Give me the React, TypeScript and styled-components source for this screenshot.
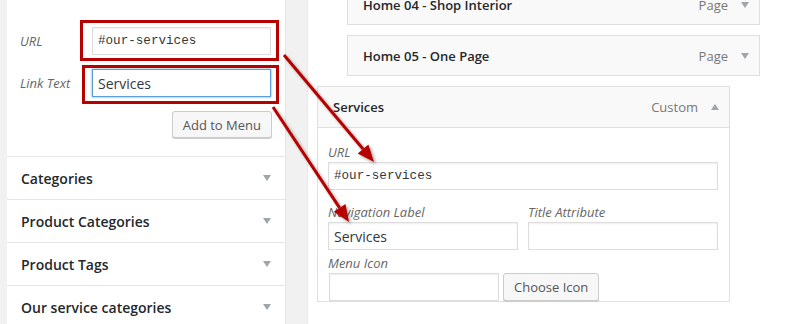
import styled, { createGlobalStyle } from "styled-components";

const GlobalStyle = createGlobalStyle`
  html, body {
    margin: 0;
    padding: 0;
    background: #f1f1f1;
    font-family: "Open Sans", "Liberation Sans", sans-serif;
    color: #444;
  }
`;

const Page = styled.div`
  position: relative;
  display: flex;
  width: 798px;
  height: 324px;
  overflow: hidden;
  padding-left: 7px;
  box-sizing: border-box;
`;

const LeftPanel = styled.div`
  width: 279px;
  flex-shrink: 0;
  background: #fff;
  border-right: 1px solid #e5e5e5;
  box-sizing: border-box;
`;

const FormBlock = styled.div`
  padding: 27px 14px 0 13px;
  height: 157px;
  box-sizing: border-box;
  border-bottom: 1px solid #e5e5e5;
`;

const FormRow = styled.div`
  display: flex;
  align-items: center;
  margin-bottom: 14px;
`;

const RowLabel = styled.label`
  width: 72px;
  font-size: 13px;
  font-style: italic;
  color: #666;
`;

const TextInput = styled.div<{ $mono?: boolean; $focus?: boolean; $w?: number }>`
  width: ${(p) => (p.$w ? `${p.$w}px` : "100%")};
  height: 28px;
  box-sizing: border-box;
  flex-shrink: 0;
  display: flex;
  align-items: center;
  padding: 0 5px;
  background: #fff;
  border: 1px solid ${(p) => (p.$focus ? "#5b9dd9" : "#ddd")};
  box-shadow: ${(p) =>
    p.$focus ? "0 0 2px rgba(30,140,190,.8)" : "inset 0 1px 2px rgba(0,0,0,.07)"};
  font-family: ${(p) =>
    p.$mono ? `"Liberation Mono", "DejaVu Sans Mono", monospace` : `"Open Sans", "Liberation Sans", sans-serif`};
  font-size: ${(p) => (p.$mono ? "12.6px" : "14px")};
  color: #32373c;
`;

const ButtonRow = styled.div`
  display: flex;
  justify-content: flex-end;
  margin-top: 1px;
  margin-right: -1px;
`;

const Button = styled.div<{ $h?: number }>`
  height: ${(p) => p.$h ?? 27}px;
  box-sizing: border-box;
  padding: 0 10px;
  display: flex;
  align-items: center;
  border: 1px solid #ccc;
  border-radius: 3px;
  background: #f7f7f7;
  box-shadow: 0 1px 0 #ccc;
  font-size: 13px;
  color: #555;
  white-space: nowrap;
`;

const Section = styled.div`
  height: 43px;
  box-sizing: border-box;
  border-bottom: 1px solid #e5e5e5;
  display: flex;
  align-items: center;
  justify-content: space-between;
  padding: 0 14px 0 14px;
  font-size: 14px;
  font-weight: 600;
  color: #23282d;
`;

const Caret = styled.span<{ $up?: boolean }>`
  width: 0;
  height: 0;
  border-left: 4px solid transparent;
  border-right: 4px solid transparent;
  ${(p) => (p.$up ? "border-bottom: 6px solid #a0a5aa;" : "border-top: 6px solid #a0a5aa;")}
`;

const RightArea = styled.div`
  margin-left: 21px;
  flex: 1;
  background: #fff;
  border-left: 1px solid #e9e9e9;
  padding-left: 9px;
`;

const PageList = styled.div`
  margin-top: -16px;
  padding-left: 30px;
  display: flex;
  flex-direction: column;
  gap: 10px;
  margin-bottom: 10px;
`;

const ItemBar = styled.div<{ $head?: boolean }>`
  width: ${(p) => (p.$head ? "auto" : "413px")};
  height: 41px;
  box-sizing: border-box;
  border: ${(p) => (p.$head ? "none" : "1px solid #dfdfdf")};
  border-bottom: 1px solid #dfdfdf;
  background: #f9f9f9;
  display: flex;
  align-items: center;
  padding: 0 10px 0 15px;
  font-size: 13px;
  font-weight: 600;
  color: #23282d;
`;

const ItemTitle = styled.span`
  flex: 1;
`;

const ItemType = styled.span`
  font-size: 13px;
  font-weight: 400;
  color: #777;
  margin-right: 13px;
`;

const EditBox = styled.div`
  width: 413px;
  border: 1px solid #dfdfdf;
  box-sizing: border-box;
  background: #fff;
`;

const EditBody = styled.div`
  padding: 15px 11px 0 10px;
`;

const FieldLabel = styled.div`
  font-size: 13px;
  line-height: 18px;
  font-style: italic;
  color: #666;
`;

const Field = styled.div<{ $gap?: number }>`
  flex: 1;
  display: flex;
  flex-direction: column;
  gap: 1px;
  margin-bottom: ${(p) => p.$gap ?? 0}px;
`;

const FieldPair = styled.div`
  display: flex;
  gap: 10px;
  margin-bottom: 4px;
`;

const IconRow = styled.div`
  display: flex;
  gap: 4px;
  margin-top: 1px;
  padding-left: 1px;
`;

const Overlay = styled.svg`
  position: absolute;
  left: 0;
  top: 0;
  pointer-events: none;
`;

const sections = ["Categories", "Product Categories", "Product Tags", "Our service categories"];

const Arrow = ({ x1, y1, x2, y2 }: { x1: number; y1: number; x2: number; y2: number }) => {
  const ang = Math.atan2(y2 - y1, x2 - x1);
  const len = 17;
  const half = 7;
  const bx = x2 - Math.cos(ang) * len;
  const by = y2 - Math.sin(ang) * len;
  const px = -Math.sin(ang) * half;
  const py = Math.cos(ang) * half;
  return (
    <g filter="url(#shadow)">
      <line x1={x1} y1={y1} x2={bx} y2={by} stroke="#b70000" strokeWidth={3} />
      <polygon points={`${x2},${y2} ${bx + px},${by + py} ${bx - px},${by - py}`} fill="#b70000" />
    </g>
  );
};

export default function App() {
  return (
    <>
      <GlobalStyle />
      <Page>
        <LeftPanel>
          <FormBlock>
            <FormRow>
              <RowLabel>URL</RowLabel>
              <TextInput $mono $w={179}>#our-services</TextInput>
            </FormRow>
            <FormRow>
              <RowLabel>Link Text</RowLabel>
              <TextInput $focus $w={179}>Services</TextInput>
            </FormRow>
            <ButtonRow>
              <Button>Add to Menu</Button>
            </ButtonRow>
          </FormBlock>
          {sections.map((s) => (
            <Section key={s}>
              {s}
              <Caret />
            </Section>
          ))}
        </LeftPanel>
        <RightArea>
          <PageList>
            <ItemBar>
              <ItemTitle>Home 04 - Shop Interior</ItemTitle>
              <ItemType>Page</ItemType>
              <Caret />
            </ItemBar>
            <ItemBar>
              <ItemTitle>Home 05 - One Page</ItemTitle>
              <ItemType>Page</ItemType>
              <Caret />
            </ItemBar>
          </PageList>
          <EditBox>
            <ItemBar $head>
              <ItemTitle>Services</ItemTitle>
              <ItemType>Custom</ItemType>
              <Caret $up />
            </ItemBar>
            <EditBody>
              <Field $gap={13}>
                <FieldLabel>URL</FieldLabel>
                <TextInput $mono>#our-services</TextInput>
              </Field>
              <FieldPair>
                <Field>
                  <FieldLabel>Navigation Label</FieldLabel>
                  <TextInput>Services</TextInput>
                </Field>
                <Field>
                  <FieldLabel>Title Attribute</FieldLabel>
                  <TextInput />
                </Field>
              </FieldPair>
              <FieldLabel>Menu Icon</FieldLabel>
              <IconRow>
                <TextInput $w={170} />
                <Button $h={28}>Choose Icon</Button>
              </IconRow>
            </EditBody>
          </EditBox>
        </RightArea>
        <Overlay width={798} height={324}>
          <defs>
            <filter id="shadow" x="-20%" y="-20%" width="140%" height="140%">
              <feDropShadow dx="2" dy="2" stdDeviation="1.5" floodColor="#000" floodOpacity="0.35" />
            </filter>
          </defs>
          <rect x={81.5} y={21.5} width={196} height={38} fill="none" stroke="#b70000" strokeWidth={3} />
          <rect x={83.5} y={66.5} width={194} height={36} fill="none" stroke="#b70000" strokeWidth={3} />
          <Arrow x1={284} y1={55} x2={374} y2={162} />
          <Arrow x1={273} y1={107} x2={349} y2={222} />
        </Overlay>
      </Page>
    </>
  );
}
